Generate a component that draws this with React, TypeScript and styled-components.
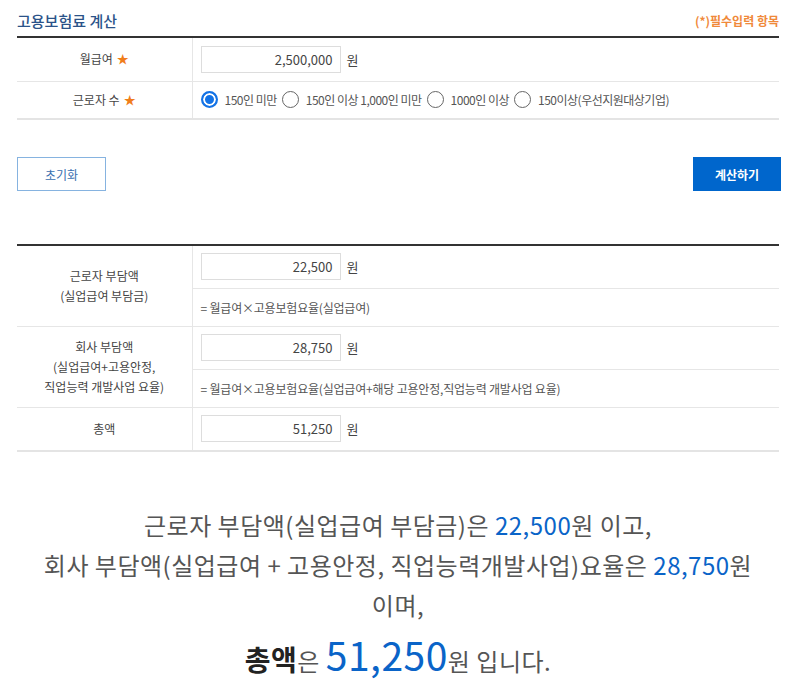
import styled, { createGlobalStyle } from 'styled-components';

const GlobalStyle = createGlobalStyle`
  body {
    margin: 0;
    background: #fff;
    font-family: 'Noto Sans CJK KR', 'Noto Sans', sans-serif;
    color: #444;
  }
  * {
    box-sizing: border-box;
  }
`;

const Page = styled.div`
  width: 762px;
  margin-left: 17px;
`;

const Header = styled.div`
  height: 36px;
  padding-top: 4px;
  display: flex;
  align-items: center;
  justify-content: space-between;
`;

const Title = styled.h2`
  margin: 0;
  font-size: 15px;
  font-weight: 500;
  color: #2b5389;
`;

const Required = styled.span`
  font-size: 12px;
  font-weight: 700;
  color: #f0893a;
`;

const Table = styled.table`
  width: 100%;
  border-collapse: collapse;
  border-top: 2px solid #333;
  border-bottom: 2px solid #e4e4e4;
`;

const Th = styled.th`
  width: 175px;
  padding: 0;
  font-size: 12px;
  font-weight: 400;
  line-height: 20px;
  color: #444;
  text-align: center;
  border-right: 1px solid #e6e6e6;
  border-bottom: 1px solid #e6e6e6;
`;

const Td = styled.td<{ $h: number }>`
  height: ${(p) => p.$h}px;
  padding: 0 8px;
  font-size: 12px;
  letter-spacing: -0.2px;
  color: #555;
  border-bottom: 1px solid #e6e6e6;
`;

const Star = styled.span`
  color: #f07d1a;
  margin-left: 4px;
`;

const Field = styled.div`
  display: flex;
  align-items: center;
  gap: 6px;
  font-size: 13px;
  letter-spacing: 0;
  color: #444;
`;

const Amount = styled.input`
  width: 140px;
  height: 27px;
  padding: 0 7px;
  border: 1px solid #ddd;
  font-family: inherit;
  font-size: 13px;
  color: #444;
  text-align: right;
  outline: none;
`;

const RadioGroup = styled.div`
  display: flex;
  align-items: center;
  gap: 5px;
`;

const RadioLabel = styled.label`
  display: flex;
  align-items: center;
  gap: 7px;
  font-size: 12px;
  letter-spacing: -0.5px;
  color: #555;
  white-space: nowrap;
`;

const Radio = styled.input`
  appearance: none;
  width: 17px;
  height: 17px;
  margin: 0;
  border-radius: 50%;
  border: 1px solid #666;
  background: #fff;

  &:checked {
    border: 2px solid #1473e6;
    background: #1473e6;
    box-shadow: inset 0 0 0 2px #fff;
  }
`;

const Buttons = styled.div`
  margin-top: 37px;
  display: flex;
  justify-content: space-between;
`;

const Button = styled.button<{ $primary?: boolean }>`
  height: 34px;
  width: ${(p) => (p.$primary ? 88 : 89)}px;
  margin-right: ${(p) => (p.$primary ? -2 : 0)}px;
  font-family: inherit;
  font-size: 12px;
  font-weight: ${(p) => (p.$primary ? 700 : 400)};
  color: ${(p) => (p.$primary ? '#fff' : '#3a6fb0')};
  background: ${(p) => (p.$primary ? '#0066cc' : '#fff')};
  border: 1px solid ${(p) => (p.$primary ? '#0066cc' : '#86b3e0')};
  cursor: pointer;
`;

const ResultTable = styled(Table)`
  margin-top: 53px;
`;

const Summary = styled.div`
  margin-top: 53px;
  text-align: center;
  color: #555;
  font-size: 24px;
  letter-spacing: 0.5px;
`;

const SummaryText = styled.p`
  margin: 0;
  line-height: 40px;
`;

const TotalText = styled.p`
  margin: 4px 0 0;
  line-height: 50px;
`;

const Blue = styled.span<{ $big?: boolean }>`
  color: #0a64c8;
  font-size: ${(p) => (p.$big ? 39 : 24)}px;
`;

const Strong = styled.strong`
  color: #222;
  font-size: 28px;
  font-weight: 700;
`;

const sizes = ['150인 미만', '150인 이상 1,000인 미만', '1000인 이상', '150이상(우선지원대상기업)'];

export default function App() {
  return (
    <Page>
      <GlobalStyle />
      <Header>
        <Title>고용보험료 계산</Title>
        <Required>(*)필수입력 항목</Required>
      </Header>
      <Table>
        <tbody>
          <tr>
            <Th>
              월급여<Star>★</Star>
            </Th>
            <Td $h={44}>
              <Field>
                <Amount readOnly value="2,500,000" />원
              </Field>
            </Td>
          </tr>
          <tr>
            <Th>
              근로자 수<Star>★</Star>
            </Th>
            <Td $h={38}>
              <RadioGroup>
                {sizes.map((s, i) => (
                  <RadioLabel key={s}>
                    <Radio type="radio" name="size" defaultChecked={i === 0} />
                    {s}
                  </RadioLabel>
                ))}
              </RadioGroup>
            </Td>
          </tr>
        </tbody>
      </Table>

      <Buttons>
        <Button>초기화</Button>
        <Button $primary>계산하기</Button>
      </Buttons>

      <ResultTable>
        <tbody>
          <tr>
            <Th rowSpan={2}>
              근로자 부담액
              <br />
              (실업급여 부담금)
            </Th>
            <Td $h={43}>
              <Field>
                <Amount readOnly value="22,500" />원
              </Field>
            </Td>
          </tr>
          <tr>
            <Td $h={38}>= 월급여×고용보험요율(실업급여)</Td>
          </tr>
          <tr>
            <Th rowSpan={2}>
              회사 부담액
              <br />
              (실업급여+고용안정,
              <br />
              직업능력 개발사업 요율)
            </Th>
            <Td $h={43}>
              <Field>
                <Amount readOnly value="28,750" />원
              </Field>
            </Td>
          </tr>
          <tr>
            <Td $h={38}>= 월급여×고용보험요율(실업급여+해당 고용안정,직업능력 개발사업 요율)</Td>
          </tr>
          <tr>
            <Th>총액</Th>
            <Td $h={44}>
              <Field>
                <Amount readOnly value="51,250" />원
              </Field>
            </Td>
          </tr>
        </tbody>
      </ResultTable>

      <Summary>
        <SummaryText>
          근로자 부담액(실업급여 부담금)은 <Blue>22,500</Blue>원 이고,
          <br />
          회사 부담액(실업급여 + 고용안정, 직업능력개발사업)요율은 <Blue>28,750</Blue>원
          <br />
          이며,
        </SummaryText>
        <TotalText>
          <Strong>총액</Strong>은 <Blue $big>51,250</Blue>원 입니다.
        </TotalText>
      </Summary>
    </Page>
  );
}
